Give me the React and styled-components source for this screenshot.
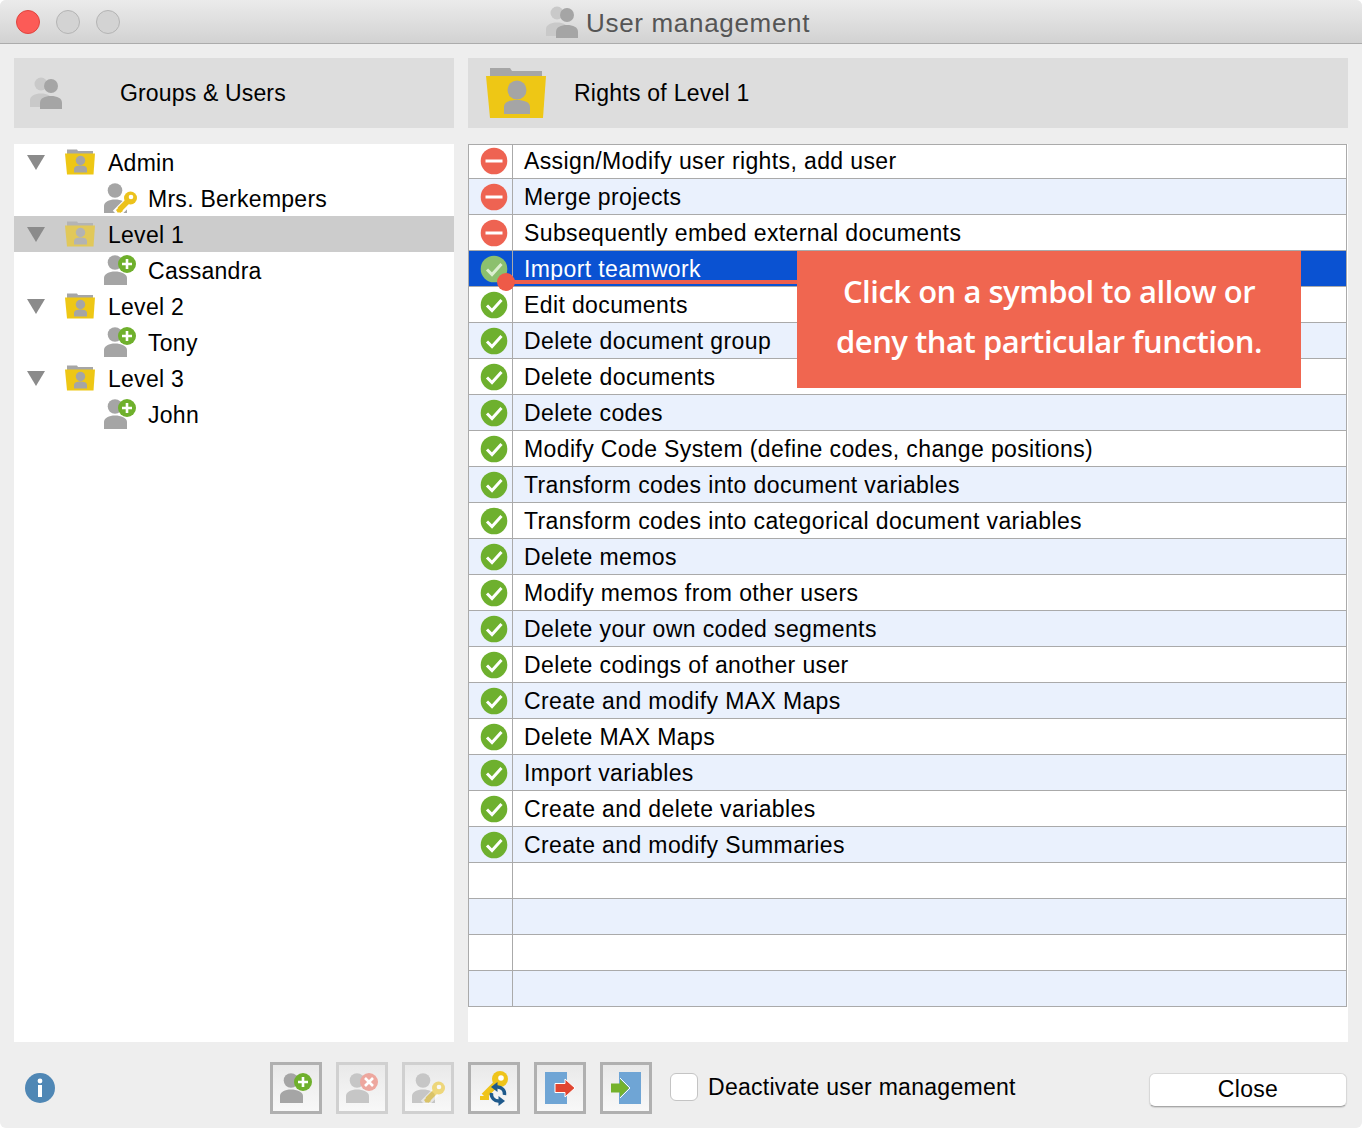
import React from "react";
import styled, { createGlobalStyle } from "styled-components";

const Global = createGlobalStyle`
  html, body { margin: 0; padding: 0; background: #fff; }
  * { box-sizing: border-box; }
  body { font-family: "Liberation Sans", Arial, sans-serif; color: #000; }
`;

const Win = styled.div`
  width: 1362px; height: 1128px; background: #eeeeee; border-radius: 6px; overflow: hidden;
  display: flex; flex-direction: column;
`;
const TitleBar = styled.div`
  height: 44px; flex: none; border-bottom: 1px solid #acacac;
  background: linear-gradient(#ebebeb, #d2d2d2);
  display: flex; align-items: center; padding-left: 16px; position: relative;
`;
const Lights = styled.div`display: flex; gap: 16px;`;
const Light = styled.span`
  width: 24px; height: 24px; border-radius: 50%;
  background: ${p => p.$on ? "#fc5b57" : "#d3d3d3"};
  border: 1px solid ${p => p.$on ? "#e0443e" : "#b4b4b4"};
`;
const Title = styled.div`
  position: absolute; left: 546px; top: 0; height: 43px; display: flex; align-items: center; gap: 8px;
  font-size: 26px; color: #555; letter-spacing: 0.68px;
`;
const TitleText = styled.span`margin-top: 3px;`;
const Main = styled.div`
  height: 998px; flex: none; padding: 14px 14px 0; display: grid;
  grid-template-columns: 440px 880px; grid-template-rows: 70px 898px; column-gap: 14px; row-gap: 16px;
`;
const Header = styled.div`
  background: #dddddd; display: flex; align-items: center; font-size: 23px; letter-spacing: ${p => p.$ls}px;
  padding-left: ${p => p.$pl}px;
`;
const HeaderLabel = styled.span`margin-left: ${p => p.$ml}px; margin-top: 1px;`;
const Tree = styled.div`background: #fff;`;
const TreeRow = styled.div`
  height: 36px; display: flex; align-items: center; font-size: 23px; letter-spacing: 0.27px;
  background: ${p => p.$sel ? "#cccccc" : "transparent"};
  padding-left: ${p => p.$child ? 90 : 13}px;
`;
const TreeLabel = styled.span`margin-top: 2px;`;
const Caret = styled.span`
  width: 0; height: 0; border-left: 9px solid transparent; border-right: 9px solid transparent;
  border-top: 15px solid #8b8b8b; margin-right: 20px;
`;
const FolderWrap = styled.span`display: flex; margin-right: 13px; opacity: ${p => p.$dim ? .62 : 1};`;
const UserWrap = styled.span`display: flex; margin-right: 11px;`;

const Panel = styled.div`background: #fff; position: relative;`;
const Table = styled.div`border: 1px solid #aaaaaa; border-bottom: 0; width: 879px;`;
const Row = styled.div`
  height: 36px; display: grid; grid-template-columns: 44px 1fr;
  border-bottom: 1px solid #aaaaaa;
  background: ${p => p.$sel ? "#0a52d2" : p.$alt ? "#eaf1fd" : "#fff"};
  color: ${p => p.$sel ? "#fff" : "#000"};
  &:first-child { height: 34px; }
`;
const StatusCell = styled.div`
  border-right: 1px solid #aaaaaa; display: flex; align-items: center; justify-content: center;
  padding: 0 0 1px 6px;
`;
const TextCell = styled.div`
  padding-left: 11px; font-size: 23px; letter-spacing: 0.38px; line-height: 37px; white-space: nowrap;
  ${Row}:first-child & { line-height: 33px; }
`;
const Dot = styled.div`
  position: absolute; left: 29px; top: 129px; width: 18px; height: 18px; border-radius: 50%; background: #ee5a48;
`;
const Line = styled.div`
  position: absolute; left: 38px; top: 136px; width: 300px; height: 4px; background: #ee5f4c;
`;
const Callout = styled.div`
  position: absolute; left: 329px; top: 107px; width: 504px; height: 137px; background: #f06650;
  color: #fff; font-family: "Open Sans", sans-serif; font-weight: 600; font-size: 31px; line-height: 50px;
  text-align: center; padding-top: 15px; letter-spacing: -0.48px;
`;

const Footer = styled.div`
  flex: 1; display: flex; align-items: flex-start; position: relative; padding: 20px 0 0 25px;
`;
const Info = styled.div`margin: 11px 215px 0 0; display: flex;`;
const Tools = styled.div`display: flex; gap: 14px;`;
const Tool = styled.div`
  width: 52px; height: 52px; border: 3px solid ${p => p.$off ? "#d0d0d0" : "#b0b0b0"};
  background: linear-gradient(#e9e9e9, #f8f8f8); display: flex; align-items: center; justify-content: center;
`;
const CheckLabel = styled.label`
  margin: 10px 0 0 18px; display: flex; align-items: center; gap: 10px; font-size: 23px; letter-spacing: 0.28px;
`;
const CheckText = styled.span`margin-top: 2px;`;
const Box = styled.span`
  width: 28px; height: 28px; border-radius: 6px; background: #fff; border: 1px solid #c4c4c4; flex: none;
`;
const CloseBtn = styled.div`
  position: absolute; left: 1149px; top: 31px; width: 198px; height: 34px; background: #fff; border-radius: 6px;
  border: 1px solid #d8d8d8; border-bottom-color: #a8a8a8; box-shadow: 0 1px 1px rgba(0,0,0,.12);
  display: flex; align-items: center; justify-content: center; font-size: 23px; letter-spacing: .3px;
  padding-bottom: 2px;
`;

const Person = ({ c = "#a5a5a5" }) => (
  <g fill={c}>
    <circle cx="11" cy="8.5" r="7.3" />
    <path d="M0 31V24C0 20 5 17.5 11 17.5S23 20 23 24V31Z" />
  </g>
);
const KeyShape = ({ o = 1 }) => (
  <g opacity={o}>
    <path d="M12 32 L24 20" stroke="#fff" strokeWidth="9" fill="none" />
    <path d="M15.5 27.5 L24 19" stroke="#ecc21c" strokeWidth="5.5" fill="none" />
    <path d="M12 28 L15 25 L19 29 L16 31 L15 30 L14 31Z" fill="#ecc21c" />
    <circle cx="26.5" cy="16" r="6.5" fill="#ecc21c" />
    <circle cx="27" cy="15" r="2.3" fill="#fff" />
  </g>
);
const UserKey = ({ o = 1, pc }) => (
  <svg width="33" height="32" viewBox="0 0 33 32">
    <Person c={pc} /><KeyShape o={o} />
  </svg>
);
const UserAdd = () => (
  <svg width="33" height="32" viewBox="0 0 33 32">
    <Person />
    <circle cx="23" cy="10" r="9" fill="#6fb02c" />
    <path d="M23 5V15M18 10H28" stroke="#fff" strokeWidth="2.6" />
  </svg>
);
const UserRemove = () => (
  <svg width="33" height="32" viewBox="0 0 33 32">
    <Person c="#c6c6c6" />
    <circle cx="23" cy="10" r="9" fill="#eda79e" />
    <path d="M19 6L27 14M27 6L19 14" stroke="#fff" strokeWidth="2.6" />
  </svg>
);
const Folder = ({ w = 30, h = 26 }) => (
  <svg width={w} height={h} viewBox="0 0 60 50">
    <path d="M4 0H24L26 3H56V10H4Z" fill="#a6a6a6" />
    <path d="M0 8H60L57 50H4Z" fill="#eec715" />
    <circle cx="31" cy="22" r="9.5" fill="#a5a5a5" />
    <path d="M18 46V39C18 34 24 32 31 32S44 34 44 39V46Z" fill="#a5a5a5" />
  </svg>
);
const Group = ({ w = 32, h = 32 }) => (
  <svg width={w} height={h} viewBox="0 0 32 32">
    <circle cx="11" cy="7" r="6.5" fill="#c9c9c9" />
    <path d="M0 30V23C0 19 5 16.5 11 16.5S22 19 22 23V30Z" fill="#c9c9c9" />
    <circle cx="21" cy="9" r="7" fill="#a5a5a5" />
    <path d="M10 32V26C10 21 15 19 21 19S32 21 32 26V32Z" fill="#a5a5a5" />
  </svg>
);
const Status = ({ ok, dim }) => (
  <svg width="28" height="28" viewBox="0 0 28 28">
    <circle cx="14" cy="14" r="13.3" fill={ok ? (dim ? "#8cc06e" : "#6eb02e") : "#ee6352"} />
    {ok
      ? <path d="M7 14.5L12 19.5L21.5 9" fill="none" stroke={dim ? "#dcefd0" : "#fff"} strokeWidth="3" />
      : <rect x="5.5" y="12.5" width="17" height="3" fill="#fff" />}
  </svg>
);
const KeySync = () => (
  <svg width="34" height="36" viewBox="0 0 34 36">
    <circle cx="23" cy="9" r="8" fill="#efc41a" />
    <circle cx="24" cy="8" r="2.8" fill="#fff" />
    <path d="M19 14L7 26" stroke="#efc41a" strokeWidth="6.5" />
    <path d="M3 26H12V30H3Z" fill="#efc41a" />
    <path d="M27.5 25A7 7 0 0 0 20 17" fill="none" stroke="#1f5a8c" strokeWidth="3.4" />
    <path d="M20.5 12V22L14 17Z" fill="#1f5a8c" />
    <path d="M14.5 23A7 7 0 0 0 22 31" fill="none" stroke="#1f5a8c" strokeWidth="3.4" />
    <path d="M21.5 26V36L28 31Z" fill="#1f5a8c" />
  </svg>
);
const DoorOut = () => (
  <svg width="34" height="32" viewBox="0 0 34 32">
    <rect x="2" y="0" width="22" height="32" fill="#6fa5d5" />
    <path d="M12 11.5H22V7L32 16L22 25V20.5H12Z" fill="#e04530" stroke="#fff" strokeWidth="1" />
  </svg>
);
const DoorIn = () => (
  <svg width="34" height="32" viewBox="0 0 34 32">
    <rect x="10" y="0" width="22" height="32" fill="#6fa5d5" />
    <path d="M2 11.5H11V7L20 16L11 25V20.5H2Z" fill="#74b22c" />
    <path d="M11 6L21 16L11 26" fill="none" stroke="#fff" strokeWidth="1" />
  </svg>
);
const InfoIcon = () => (
  <svg width="30" height="30" viewBox="0 0 30 30">
    <circle cx="15" cy="15" r="15" fill="#4f87b5" />
    <circle cx="15" cy="8" r="2.4" fill="#fff" />
    <rect x="13" y="12" width="4" height="12" fill="#fff" />
  </svg>
);

const rights = [
  ["Assign/Modify user rights, add user", 0], ["Merge projects", 0], ["Subsequently embed external documents", 0],
  ["Import teamwork", 1], ["Edit documents", 1], ["Delete document group", 1], ["Delete documents", 1], ["Delete codes", 1],
  ["Modify Code System (define codes, change positions)", 1], ["Transform codes into document variables", 1],
  ["Transform codes into categorical document variables", 1], ["Delete memos", 1], ["Modify memos from other users", 1],
  ["Delete your own coded segments", 1], ["Delete codings of another user", 1], ["Create and modify MAX Maps", 1],
  ["Delete MAX Maps", 1], ["Import variables", 1], ["Create and delete variables", 1], ["Create and modify Summaries", 1],
  ["", null], ["", null], ["", null], ["", null],
];
const tree = [
  ["Admin", "Mrs. Berkempers", "key"], ["Level 1", "Cassandra", "add"], ["Level 2", "Tony", "add"], ["Level 3", "John", "add"],
];

export default function App() {
  return (
    <Win>
      <Global />
      <TitleBar>
        <Lights><Light $on /><Light /><Light /></Lights>
        <Title><Group /><TitleText>User management</TitleText></Title>
      </TitleBar>
      <Main>
        <Header $pl={16} $ls={0.16}><Group /><HeaderLabel $ml={58}>Groups &amp; Users</HeaderLabel></Header>
        <Header $pl={18} $ls={0.25}><Folder w={60} h={50} /><HeaderLabel $ml={28}>Rights of Level 1</HeaderLabel></Header>
        <Tree>
          {tree.map(([g, u, kind]) => (
            <React.Fragment key={g}>
              <TreeRow $sel={g === "Level 1"}>
                <Caret />
                <FolderWrap $dim={g === "Level 1"}><Folder /></FolderWrap>
                <TreeLabel>{g}</TreeLabel>
              </TreeRow>
              <TreeRow $child>
                <UserWrap>{kind === "key" ? <UserKey /> : <UserAdd />}</UserWrap>
                <TreeLabel>{u}</TreeLabel>
              </TreeRow>
            </React.Fragment>
          ))}
        </Tree>
        <Panel>
          <Table>
            {rights.map(([t, ok], i) => (
              <Row key={i} $alt={i % 2 === 1} $sel={i === 3}>
                <StatusCell>{ok !== null && <Status ok={ok === 1} dim={i === 3} />}</StatusCell>
                <TextCell>{t}</TextCell>
              </Row>
            ))}
          </Table>
          <Line />
          <Dot />
          <Callout>Click on a symbol to allow or<br />deny that particular function.</Callout>
        </Panel>
      </Main>
      <Footer>
        <Info><InfoIcon /></Info>
        <Tools>
          <Tool><UserAdd /></Tool>
          <Tool $off><UserRemove /></Tool>
          <Tool $off><UserKey o={0.55} pc="#c6c6c6" /></Tool>
          <Tool><KeySync /></Tool>
          <Tool><DoorOut /></Tool>
          <Tool><DoorIn /></Tool>
        </Tools>
        <CheckLabel><Box /><CheckText>Deactivate user management</CheckText></CheckLabel>
        <CloseBtn>Close</CloseBtn>
      </Footer>
    </Win>
  );
}
